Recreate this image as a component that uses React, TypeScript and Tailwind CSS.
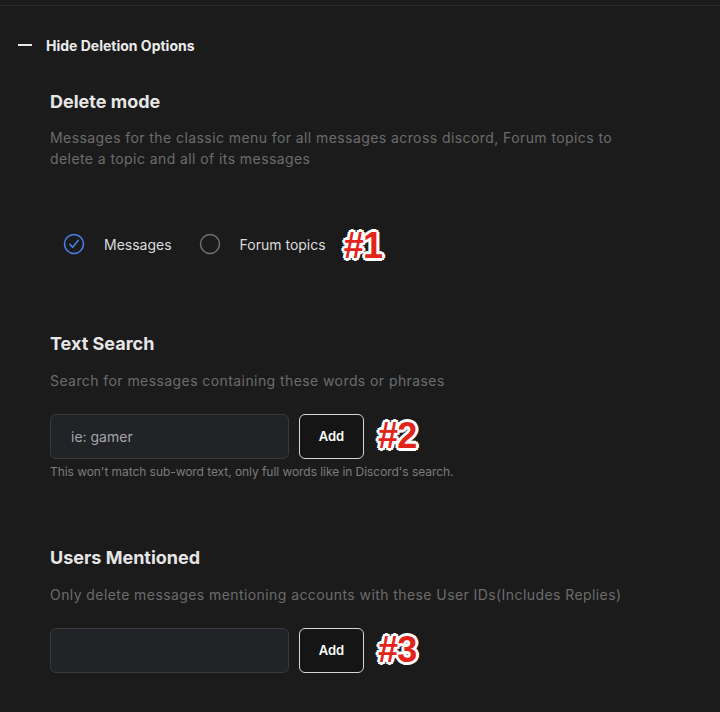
import React from "react";

const Tag = ({ children }: { children: React.ReactNode }) => (
  <span className="font-['Liberation_Sans',Arial,sans-serif] text-[36px] font-bold leading-none tracking-[-0.02em] text-[#e3241b] [text-shadow:2px_0_0_#fff,-2px_0_0_#fff,0_2px_0_#fff,0_-2px_0_#fff,2px_2px_0_#fff,-2px_-2px_0_#fff,2px_-2px_0_#fff,-2px_2px_0_#fff,3px_0_0_#fff,-3px_0_0_#fff,0_3px_0_#fff,0_-3px_0_#fff]">
    {children}
  </span>
);

const Title = ({ children, className = "" }: { children: React.ReactNode; className?: string }) => (
  <h2 className={"text-[18px] font-bold leading-[24px] text-[#e6e6e6] " + className}>{children}</h2>
);

const Desc = ({ children, className = "" }: { children: React.ReactNode; className?: string }) => (
  <p className={"text-[14px] leading-[21px] tracking-[0.03em] text-[#6c6c6c] " + className}>{children}</p>
);

const InputRow = ({ placeholder, tag }: { placeholder: string; tag: string }) => (
  <div className="flex items-center">
    <div className="flex h-[45px] w-[239px] items-center rounded-[6px] border border-[#38393d] bg-[#222327] pl-[20px] text-[14px] text-[#a3a5aa]">
      {placeholder}
    </div>
    <button className="ml-[10px] h-[45px] w-[65px] rounded-[6px] border border-[#d6d6d6] bg-[#151515] text-[13px] font-semibold text-white">
      Add
    </button>
    <div className="ml-[14px] mt-[-2px]">
      <Tag>{tag}</Tag>
    </div>
  </div>
);

export default function App() {
  return (
    <div className="min-h-[712px] w-[720px] bg-[#1b1b1b] font-['Inter',sans-serif]">
      <div className="h-[5px]" />
      <div className="h-[1px] bg-[#2b2b2b]" />
      <div className="flex h-[20px] items-center pl-[18px] mt-[29px]">
        <span className="block h-[2px] w-[14px] bg-[#e6e6e6]" />
        <span className="ml-[14px] text-[14px] font-bold text-[#ececec]">Hide Deletion Options</span>
      </div>

      <div className="pl-[50px]">
        <Title className="mt-[35px]">Delete mode</Title>
        <Desc className="mt-[13px] w-[580px]">
          Messages for the classic menu for all messages across discord, Forum topics to delete a topic and all of its messages
        </Desc>

        <div className="mt-[63px] flex h-[24px] items-center pl-[13px]">
          <svg width="22" height="22" viewBox="0 0 22 22" fill="none">
            <circle cx="11" cy="11" r="9.5" stroke="#4a80e8" strokeWidth="1.5" />
            <path d="M6.8 11.4 L9.6 14.2 L15.2 7.4" stroke="#4a80e8" strokeWidth="1.5" strokeLinecap="round" strokeLinejoin="round" />
          </svg>
          <span className="ml-[19px] text-[14px] text-[#dcdcdc]">Messages</span>
          <svg className="ml-[27px]" width="22" height="22" viewBox="0 0 22 22" fill="none">
            <circle cx="11" cy="11" r="9.5" stroke="#6e6e6e" strokeWidth="1.5" />
          </svg>
          <span className="ml-[19px] text-[14px] text-[#dcdcdc]">Forum topics</span>
          <span className="ml-[18px] mt-[4px]">
            <Tag>#1</Tag>
          </span>
        </div>

        <Title className="mt-[76px]">Text Search</Title>
        <Desc className="mt-[14px]">Search for messages containing these words or phrases</Desc>
        <div className="mt-[23px]">
          <InputRow placeholder="ie: gamer" tag="#2" />
        </div>
        <p className="mt-[5px] text-[12px] leading-[16px] tracking-[-0.005em] text-[#7c7c7c]">
          This won't match sub-word text, only full words like in Discord's search.
        </p>

        <Title className="mt-[66px]">Users Mentioned</Title>
        <Desc className="mt-[14px]">Only delete messages mentioning accounts with these User IDs(Includes Replies)</Desc>
        <div className="mt-[23px]">
          <InputRow placeholder="" tag="#3" />
        </div>
      </div>
    </div>
  );
}
